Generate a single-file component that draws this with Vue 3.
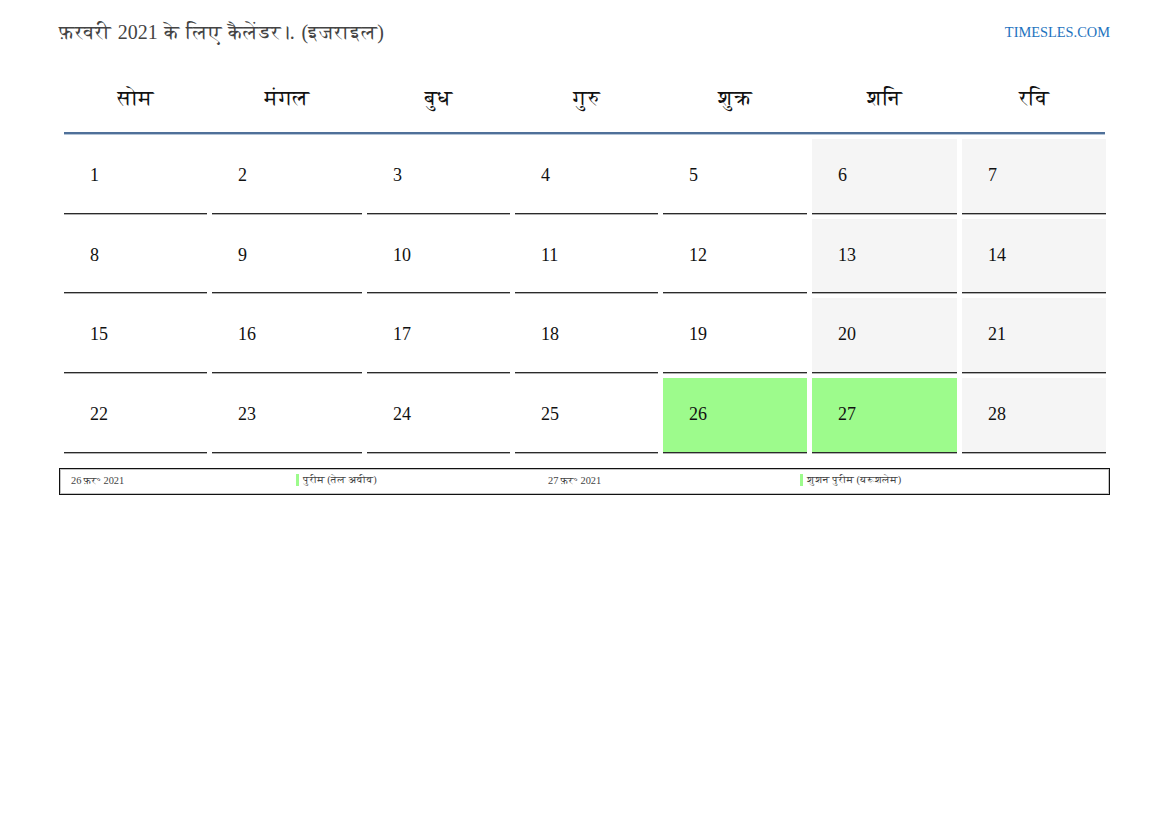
<script setup>
const days = ['सोम', 'मंगल', 'बुध', 'गुरु', 'शुक्र', 'शनि', 'रवि'];
const colW = [143, 150, 143, 143, 144, 145, 144];
const cells = Array.from({ length: 28 }, (_, i) => {
  const d = i + 1;
  const c = i % 7;
  return { d, kind: d === 26 || d === 27 ? 'hol' : c >= 5 ? 'we' : '' };
});
const cols = colW.map((w) => w + 'px').join(' ');
</script>

<template>
  <div class="page">
    <header class="top">
      <h1>फ़रवरी 2021 के लिए कैलेंडर।. (इजराइल)</h1>
      <a class="site">TIMESLES.COM</a>
    </header>
    <div class="cal">
      <div class="heads" :style="{ gridTemplateColumns: cols }">
        <div v-for="d in days" :key="d" class="head">{{ d }}</div>
      </div>
      <div class="grid" :style="{ gridTemplateColumns: cols }">
        <div v-for="c in cells" :key="c.d" class="cell" :class="c.kind">{{ c.d }}</div>
      </div>
    </div>
    <div class="legend">
      <span class="date">26 फ़र॰ 2021</span>
      <span class="name n1">पुरीम (तेल अवीव)</span>
      <span class="date d2">27 फ़र॰ 2021</span>
      <span class="name n2">शुशन पुरीम (यरूशलेम)</span>
    </div>
  </div>
</template>

<style>
html, body { background: #fff; }
</style>

<style scoped>
.page {
  width: 1051px;
  margin-left: 59px;
  font-family: "Liberation Serif", "FreeSerif", "Noto Serif Devanagari", "Lohit Devanagari", serif;
  color: #000;
}
.top {
  display: flex;
  justify-content: space-between;
  align-items: center;
  height: 64px;
}
h1 {
  margin: 0;
  font-size: 20px;
  font-weight: 400;
  word-spacing: 1.7px;
  color: #444;
}
.site {
  font-size: 14.4px;
  color: #1e73be;
}
.cal { margin-left: 5px; width: 1041px; }
.heads {
  display: grid;
  column-gap: 5px;
  border-bottom: 2px solid #4f7099;
  box-shadow: 0 1px 0 #b4c4d6;
  height: 68px;
}
.head {
  text-align: center;
  font-size: 21px;
  line-height: 69px;
  color: #111;
}
.grid {
  display: grid;
  gap: 5px;
  margin-top: 5px;
  grid-auto-rows: 74.67px;
}
.cell {
  border-bottom: 1px solid #2a2a2a;
  box-shadow: 0 1px 0 #b0b0b0;
  padding-left: 26px;
  font-size: 18px;
  line-height: 73px;
  color: #111;
}
.we { background: #f5f5f5; }
.hol { background: #9dfb8c; }
.legend {
  position: relative;
  margin-top: 15.33px;
  height: 25px;
  border: 1px solid #111;
  box-shadow: inset 0 0 0 1px #c4c4c4;
  font-size: 10.4px;
  line-height: 23px;
  color: #444;
}
.legend span { position: absolute; top: 0; white-space: nowrap; }
.date { left: 11px; word-spacing: -0.6px; }
.d2 { left: 488px; }
.name { border-left: 3px solid #9dfb8c; padding-left: 4.5px; line-height: 12px; top: 5px !important; }
.n1 { left: 235.5px; }
.n2 { left: 739.5px; }
</style>
